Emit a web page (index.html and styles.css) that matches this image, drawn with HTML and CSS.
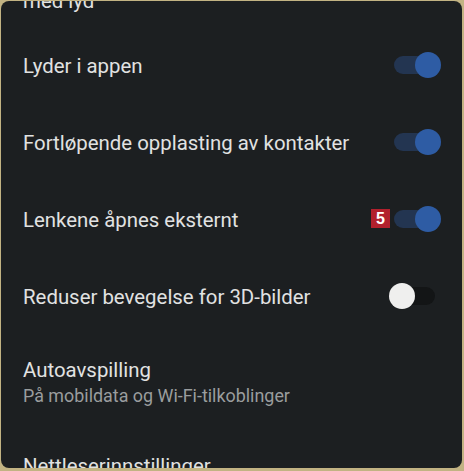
FILE: index.html
```html
<!DOCTYPE html>
<html lang="no">
<head>
    <title>Innstillinger</title>
    <meta charset="UTF-8">
    <link rel="stylesheet" href="styles.css">
</head>
<body>
    <div class="panel">
        <div class="tail">med lyd</div>

        <div class="row">
            <div class="label">Lyder i appen</div>
            <span class="switch on"></span>
        </div>

        <div class="row">
            <div class="label">Fortløpende opplasting av kontakter</div>
            <span class="switch on"></span>
        </div>

        <div class="row">
            <div class="label">Lenkene åpnes eksternt</div>
            <span class="badge">5</span>
            <span class="switch on"></span>
        </div>

        <div class="row">
            <div class="label">Reduser bevegelse for 3D-bilder</div>
            <span class="switch"></span>
        </div>

        <div class="row tall">
            <div class="label">
                Autoavspilling
                <div class="sub">På mobildata og Wi-Fi-tilkoblinger</div>
            </div>
        </div>

        <div class="row">
            <div class="label">Nettleserinnstillinger</div>
        </div>
    </div>
</body>
</html>
```

FILE: styles.css
```css
* {
    box-sizing: border-box;
}

body {
    margin: 0;
    background: #c2b383;
    font-family: Roboto, "Noto Sans", sans-serif;
}

.panel {
    margin: 1px 2px 3px 1px;
    height: 467px;
    border-radius: 8px;
    background: #1c1f21;
    overflow: hidden;
    color: #e1e2e2;
}

.tail {
    margin-top: -12px;
    padding: 0 22px 13px;
    font-size: 20.4px;
    line-height: 24px;
}

.row {
    position: relative;
    display: flex;
    align-items: center;
    justify-content: space-between;
    height: 77px;
    padding: 0 21px 0 22px;
}

.row.tall {
    height: 92px;
}

.label {
    padding-top: 3px;
    font-size: 20.4px;
    line-height: 24px;
}

.sub {
    margin-top: 4px;
    font-size: 17.9px;
    line-height: 20px;
    color: #9a9d9e;
}

.switch {
    position: relative;
    flex: none;
    width: 52px;
    height: 26px;
}

.switch::before {
    content: "";
    position: absolute;
    left: 5px;
    top: 4px;
    width: 41px;
    height: 18px;
    border-radius: 9px;
    background: #131516;
}

.switch::after {
    content: "";
    position: absolute;
    left: 0;
    top: 0;
    width: 26px;
    height: 26px;
    border-radius: 50%;
    background: #efefee;
}

.switch.on::before {
    background: #233551;
}

.switch.on::after {
    left: 26px;
    background: #2e5ca4;
}

.badge {
    position: absolute;
    right: 72px;
    top: 29px;
    width: 19px;
    height: 19px;
    background: #b2202d;
    color: #fff;
    font: bold 16px/19px "Liberation Sans", sans-serif;
    text-align: center;
}
```
